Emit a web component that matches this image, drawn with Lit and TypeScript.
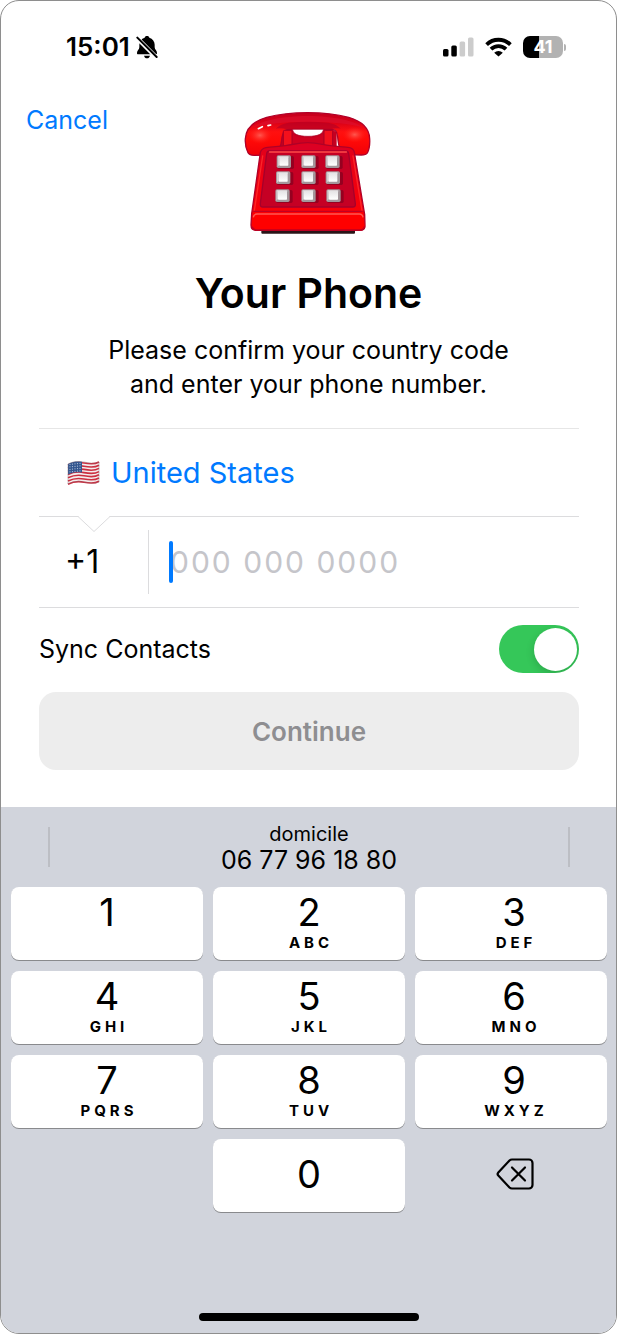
import { LitElement, html, css, svg, nothing } from "lit";
import { customElement, property, state } from "lit/decorators.js";

const KEYS: Array<[string, string]> = [
  ["1", ""],
  ["2", "ABC"],
  ["3", "DEF"],
  ["4", "GHI"],
  ["5", "JKL"],
  ["6", "MNO"],
  ["7", "PQRS"],
  ["8", "TUV"],
  ["9", "WXYZ"],
];

@customElement("status-bar")
export class StatusBar extends LitElement {
  static styles = css`
    :host {
      display: flex;
      align-items: center;
      justify-content: space-between;
      height: 92px;
      padding: 0 50px 0 65px;
      color: #000;
    }
    .group {
      display: flex;
      align-items: center;
    }
    .time {
      font-size: 26px;
      line-height: 30px;
      font-weight: 600;
    }
    .bell {
      margin-left: 6px;
    }
    .right {
      gap: 11px;
    }
    svg {
      display: block;
    }
    .battery {
      display: flex;
      align-items: center;
      gap: 1px;
    }
    .cell {
      width: 40px;
      height: 22px;
      border-radius: 7px;
      background: linear-gradient(90deg, #000 41%, #b2b2b2 41%);
      color: #fff;
      font-size: 18px;
      line-height: 22px;
      font-weight: 700;
      text-align: center;
    }
    .nub {
      width: 2px;
      height: 7px;
      border-radius: 0 2px 2px 0;
      background: #b2b2b2;
    }
  `;

  render() {
    return html`
      <div class="group">
        <span class="time">15:01</span>
        <svg class="bell" width="22" height="24" viewBox="0 0 66 72" aria-label="Silent">
          <path
            d="M33 3c4 0 6.500 2 7 5C50 11 56 19 56 29v8c0 6 7 10 7 17 0 3-1 4-3 4H6c-2 0-3-1-3-4 0-7 7-11 7-17v-8c0-10 6-18 16-21C26.500 5 29 3 33 3z"
          />
          <path d="M24 62h18c-1 5-5 8-9 8s-8-3-9-8z" />
          <path d="M-2 4 66 72" stroke="#fff" stroke-width="13" />
          <path d="M4 8 62 66" stroke="#000" stroke-width="6" stroke-linecap="round" />
        </svg>
      </div>
      <div class="group right">
        <svg width="31" height="20" viewBox="0 0 31 20" aria-label="Signal">
          <rect x="0" y="12" width="5.500" height="7.500" rx="1.500" />
          <rect x="8.300" y="8.500" width="5.500" height="11" rx="1.500" />
          <rect x="16.600" y="4.500" width="5.500" height="15" rx="1.500" fill="#ccc" />
          <rect x="25" y="0.500" width="5.500" height="19" rx="1.500" fill="#ccc" />
        </svg>
        <svg width="27" height="20" viewBox="0 0 27 20" aria-label="Wi-Fi">
          <g fill="none" stroke="#000" stroke-width="3.800">
            <path d="M1.600 7.600a17 17 0 0 1 23.800 0" />
            <path d="M6 12.200a10.700 10.700 0 0 1 15 0" />
          </g>
          <path d="M13.500 19.400 9.200 15.800a6.100 6.100 0 0 1 8.600 0z" />
        </svg>
        <div class="battery">
          <div class="cell">41</div>
          <div class="nub"></div>
        </div>
      </div>
    `;
  }
}

@customElement("phone-picture")
export class PhonePicture extends LitElement {
  static styles = css`
    :host {
      display: block;
    }
    svg {
      display: block;
    }
  `;

  render() {
    const xs = [
      [140, 214, 286],
      [138, 214, 287],
      [136, 214, 289],
    ];
    const ys = [166, 214, 268];
    return html`
      <svg width="127" height="124" viewBox="45 33 381 372" overflow="visible" aria-label="Telephone">
        <defs>
          <linearGradient id="handset" x1="0" y1="0" x2="0" y2="1">
            <stop offset="0" stop-color="#c4001f" />
            <stop offset="0.22" stop-color="#d80018" />
            <stop offset="0.45" stop-color="#ff1010" />
            <stop offset="0.65" stop-color="#ff0a08" />
            <stop offset="1" stop-color="#f00008" />
          </linearGradient>
          <radialGradient id="shine">
            <stop offset="0" stop-color="#ff6a60" stop-opacity="0.8" />
            <stop offset="1" stop-color="#ff2018" stop-opacity="0" />
          </radialGradient>
          <linearGradient id="body" x1="0" y1="0" x2="0" y2="1">
            <stop offset="0" stop-color="#e0001c" />
            <stop offset="0.5" stop-color="#f00010" />
            <stop offset="1" stop-color="#ff0000" />
          </linearGradient>
          <linearGradient id="cap" x1="0" y1="0" x2="0" y2="1">
            <stop offset="0" stop-color="#e4e2e4" />
            <stop offset="1" stop-color="#ffffff" />
          </linearGradient>
        </defs>
        <rect x="94" y="385" width="281" height="16" rx="3" fill="#2b1418" />
        <path d="M160 86h146l14 12v50H150v-50z" fill="#c60020" />
        <path
          d="M46 116C48 84 72 63 110 52c38-10 79-14 123-14s85 4 123 14c38 11 62 32 63 64 1 16-1 32-7 43-4 6-10 6-18 6l-40-1c-10-1-17-5-22-14-7-13-8-26-9-39l-3-13c-3-9-7-9-14-10H179c-9 0-16 2-19 10l-4 14c-1 13-3 26-10 39-5 8-12 13-22 14l-52 1c-8 0-14-1-18-8-6-11-9-26-8-42z"
          fill="url(#handset)"
          stroke="#b00028"
          stroke-width="4"
        />
        <path d="M68 82c24-20 84-33 165-34 81 1 141 14 165 34-38-11-93-16-165-16S106 71 68 82z" fill="#dc1030" opacity="0.6" />
        <path d="M138 86c12-12 24-16 40-18 38-4 76-4 114 0 16 2 28 6 40 18-10-3-22 0-36 2H174c-14-2-26-5-36-2z" fill="#b80024" opacity="0.7" />
        <ellipse cx="90" cy="106" rx="36" ry="26" fill="url(#shine)" />
        <ellipse cx="374" cy="104" rx="36" ry="24" fill="url(#shine)" />
        <path d="M85 86l12-6M114 77l8-2" stroke="#fff" stroke-width="5" stroke-linecap="round" />
        <path d="M188 88h92c0 14-17 21-46 21s-46-7-46-21z" fill="#fff" stroke="#a80024" stroke-width="2" />
        <path d="M187 103c10 8 26 11 47 11s37-3 47-11v30h-94z" fill="#cf0020" />
        <g stroke="#a90025" stroke-width="3">
          <rect x="160" y="91" width="26" height="52" rx="4" fill="#f3101c" />
          <rect x="282" y="91" width="26" height="52" rx="4" fill="#f3101c" />
        </g>
        <path
          d="M108 143c18-3 35-3 58-6 26-3 35-9 67-9s42 6 68 9c23 3 40 3 58 6 9 2 12 6 14 14l31 187 1 33c0 12-6 14-16 14H79c-12 0-16-5-16-16l2-34L91 158c2-8 7-13 17-15z"
          fill="url(#body)"
          stroke="#b00028"
          stroke-width="4"
        />
        <path d="M104 154c2-6 8-7 16-8 47-2 77-13 113-13s66 11 113 13c8 1 14 2 16 8l-258 0z" fill="#dc0024" />
        <path
          d="M118 153h229c6 0 8 3 9 8l20 150c1 7-2 10-8 10H99c-6 0-9-3-8-10l19-150c1-5 3-8 8-8z"
          fill="#c50024"
          stroke="#a6002b"
          stroke-width="4"
        />
        <path d="M119 156h230" stroke="#ff4a48" stroke-width="5" stroke-linecap="round" />
        <path d="M98 168 73 332M369 168l27 164" fill="none" stroke="#ff3030" stroke-width="4" stroke-linecap="round" opacity="0.8" />
        <path d="M70 338h329l5 40c0 9-6 11-14 11H79c-9 0-13-3-13-12z" fill="#ff0000" />
        <path d="M70 352c1-7 4-10 11-10h307c7 0 10 3 11 10" fill="none" stroke="#ff5850" stroke-width="4" />
        <path d="M70 334h328" stroke="#c20022" stroke-width="4" />
        <path d="M66 380c2 8 6 10 14 10h310c8 0 12-3 14-11" fill="none" stroke="#c00020" stroke-width="5" />
        ${ys.map((y, row) =>
          xs[row].map(
            (x) => svg`
              <rect x=${x + 2} y=${y + 2} width="50" height="39" rx="5" fill="#960020"></rect>
              <rect x=${x} y=${y} width="43" height="38" rx="5" fill="#a3969b"></rect>
              <path d=${`M${x + 3} ${y + 34}V${y + 5}q0-3 3-3h31l-5 5H${x + 8}v22z`} fill="#d5cdd0"></path>
              <rect x=${x + 8} y=${y + 4} width="27" height="27" rx="2" fill="url(#cap)"></rect>
            `
          )
        )}
      </svg>
    `;
  }
}

@customElement("number-pad")
export class NumberPad extends LitElement {
  static styles = css`
    :host {
      display: flex;
      flex-direction: column;
      background: #d1d4dc;
      color: #000;
    }
    button {
      box-sizing: border-box;
      border: 0;
      padding: 0;
      margin: 0;
      background: none;
      font-family: inherit;
      color: inherit;
    }
    .suggestions {
      display: flex;
      align-items: center;
      justify-content: space-between;
      height: 80px;
      padding: 0 46px 0 47px;
    }
    .bar {
      width: 2px;
      height: 40px;
      background: #bcbec4;
    }
    .suggestion {
      display: flex;
      flex-direction: column;
      align-items: center;
      line-height: 26px;
    }
    .label {
      font-size: 20px;
    }
    .value {
      font-size: 25px;
    }
    .keys {
      display: grid;
      grid-template-columns: repeat(3, 1fr);
      gap: 11px 10px;
      padding: 0 9px 0 10px;
    }
    .key {
      display: flex;
      flex-direction: column;
      align-items: center;
      justify-content: flex-start;
      gap: 3px;
      height: 73px;
      padding-top: 6px;
      border-radius: 8px;
      background: #fff;
      box-shadow: 0 1px 0 #898a8d;
    }
    .key:nth-child(3n) {
      padding-left: 6px;
    }
    .zero {
      grid-column: 2;
      justify-content: center;
      padding: 0 0 4px;
    }
    .digit {
      font-size: 38px;
      line-height: 38px;
    }
    .letters {
      font-size: 15px;
      line-height: 18px;
      font-weight: 700;
      letter-spacing: 4px;
      padding-left: 4px;
    }
    .erase {
      display: flex;
      align-items: center;
      justify-content: center;
      padding: 0 0 4px 8px;
    }
    .home {
      width: 220px;
      height: 8px;
      margin: auto auto 12px;
      border-radius: 4px;
      background: #000;
    }
  `;

  private press(key: string) {
    this.dispatchEvent(new CustomEvent("key", { detail: key }));
  }

  render() {
    return html`
      <div class="suggestions">
        <span class="bar"></span>
        <button class="suggestion" type="button">
          <span class="label">domicile</span>
          <span class="value">06 77 96 18 80</span>
        </button>
        <span class="bar"></span>
      </div>
      <div class="keys">
        ${KEYS.map(
          ([digit, letters]) => html`
            <button class="key" type="button" @click=${() => this.press(digit)}>
              <span class="digit">${digit}</span>
              ${letters ? html`<span class="letters">${letters}</span>` : nothing}
            </button>
          `
        )}
        <button class="key zero" type="button" @click=${() => this.press("0")}>
          <span class="digit">0</span>
        </button>
        <button class="erase" type="button" aria-label="Delete" @click=${() => this.press("erase")}>
          <svg width="38" height="32" viewBox="0 0 38 32" fill="none" stroke="#000" stroke-width="2.200" stroke-linecap="round" stroke-linejoin="round">
            <path d="M16 1.500h17a3.500 3.500 0 0 1 3.500 3.500v22a3.500 3.500 0 0 1-3.500 3.500H16q-1.500 0-2.500-1L2.300 17.500q-1.400-1.500 0-3L13.500 2.500q1-1 2.500-1z" />
            <path d="M16 9.500l13 13M29 9.500 16 22.500" />
          </svg>
        </button>
      </div>
      <div class="home"></div>
    `;
  }
}

@customElement("app-root")
export class AppRoot extends LitElement {
  static styles = css`
    :host {
      display: block;
      background: #fff;
      font-family: Inter, "Liberation Sans", sans-serif;
      color: #000;
    }
    * {
      box-sizing: border-box;
    }
    .screen {
      display: flex;
      flex-direction: column;
      min-height: calc(100vh - 2px);
      margin: 0 1px 2px 0;
      border: 1px solid #8e8e8e;
      border-radius: 19px;
      overflow: hidden;
    }
    button {
      border: 0;
      margin: 0;
      padding: 0;
      background: none;
      font-family: inherit;
    }
    .top {
      display: grid;
      grid-template-columns: 1fr auto 1fr;
      align-items: start;
      padding: 12px 25px 0;
    }
    .cancel {
      justify-self: start;
      font-size: 25px;
      line-height: 30px;
      color: #007aff;
    }
    .picture {
      margin-top: 6px;
    }
    h1 {
      margin: 33px 0 0;
      font-size: 41px;
      line-height: 50px;
      font-weight: 600;
      text-align: center;
    }
    .lead {
      margin: 15px 0 27px;
      font-size: 25px;
      line-height: 34px;
      text-align: center;
    }
    .form {
      display: flex;
      flex-direction: column;
      padding: 0 37px 0 38px;
    }
    .country {
      position: relative;
      display: flex;
      align-items: center;
      gap: 11px;
      height: 89px;
      padding-left: 28px;
      border-top: 1px solid #e6e6e6;
      border-bottom: 1px solid #dcdcde;
      font-size: 29px;
      line-height: 36px;
      color: #007aff;
    }
    .notch {
      position: absolute;
      left: 38px;
      top: 86px;
    }
    .number {
      display: flex;
      align-items: center;
      height: 91px;
      border-bottom: 1px solid #dcdcde;
      font-size: 30px;
      line-height: 36px;
    }
    .code {
      width: 110px;
      height: 64px;
      padding-left: 26px;
      border-right: 1px solid #dcdcde;
      font-size: 32px;
      line-height: 64px;
    }
    .field {
      position: relative;
      flex: 1;
      padding-left: 21px;
    }
    .caret {
      position: absolute;
      left: 20px;
      top: 0;
      width: 4px;
      height: 42px;
      border-radius: 2px;
      background: #007aff;
    }
    .input {
      display: block;
      width: 100%;
      height: 42px;
      padding: 0;
      border: 0;
      outline: 0;
      background: none;
      font: inherit;
      letter-spacing: 2px;
      color: #000;
      caret-color: transparent;
    }
    .input::placeholder {
      color: #c5c5ca;
      opacity: 1;
    }
    .sync {
      display: flex;
      align-items: center;
      justify-content: space-between;
      height: 82px;
      margin-bottom: 2px;
      font-size: 25px;
      line-height: 30px;
    }
    .switch {
      appearance: none;
      display: flex;
      align-items: center;
      width: 80px;
      height: 48px;
      margin: 0;
      padding: 0 2px;
      border-radius: 24px;
      overflow: hidden;
      background: #e9e9eb;
    }
    .switch::before {
      content: "";
      width: 43px;
      height: 43px;
      border-radius: 50%;
      background: #fff;
      box-shadow: 0 3px 8px rgba(0, 0, 0, 0.16);
    }
    .switch:checked {
      justify-content: flex-end;
      background: #35c759;
    }
    .continue {
      height: 78px;
      border-radius: 17px;
      background: #ededed;
      color: #8e8e91;
      font-size: 26px;
      font-weight: 600;
    }
    .pad {
      flex: 1;
      margin-top: 37px;
    }
  `;

  @property() country = "United States";
  @state() private phone = "";

  private onKey(event: CustomEvent<string>) {
    this.phone = event.detail === "erase" ? this.phone.slice(0, -1) : this.phone + event.detail;
  }

  private flag() {
    const wave = (y: number) => `M1 ${y + 2}C7 ${y - 1} 12 ${y - 1} 17 ${y}S27 ${y + 2} 32 ${y - 1}`;
    const stripes = [0, 1, 2, 3, 4, 5, 6];
    return html`
      <svg width="33" height="24" viewBox="0 0 33 24" aria-hidden="true">
        <path d="M1 3C7 0 12 0 17 1S27 3 32 1V21C27 23 22 22 17 21S7 20 1 23z" fill="#f3eeee" />
        ${stripes.map(
          (i) => svg`<path d=${wave(2 + i * 3.200)} fill="none" stroke="#cc2f40" stroke-width="1.600"></path>`
        )}
        <path d="M1 3C6 .500 10 .300 15 .800V11.500C10 11 6 11 1 13.500z" fill="#33568f" />
        ${[3, 5.500, 8, 10.500].map((y) =>
          [3, 5.500, 8, 10.500, 13].map(
            (x) => svg`<circle cx=${x} cy=${y + 0.600 - x * 0.100} r=".600" fill="#b9c7dd"></circle>`
          )
        )}
        <path d="M1 3C7 0 12 0 17 1S27 3 32 1V21C27 23 22 22 17 21S7 20 1 23z" fill="none" stroke="#7d6570" stroke-width=".600" opacity=".6" />
      </svg>
    `;
  }

  render() {
    return html`
      <main class="screen">
        <status-bar></status-bar>
        <div class="top">
          <button class="cancel" type="button">Cancel</button>
          <phone-picture class="picture"></phone-picture>
        </div>
        <h1>Your Phone</h1>
        <p class="lead">Please confirm your country code<br />and enter your phone number.</p>
        <form class="form" @submit=${(e: Event) => e.preventDefault()}>
          <button class="country" type="button">
            ${this.flag()}
            <span>${this.country}</span>
            <svg class="notch" width="34" height="18" viewBox="0 0 34 18" aria-hidden="true">
              <path d="M1 0H33V1L17 17 1 1z" fill="#fff" />
              <path d="M1 1.500 17 16.500 33 1.500" fill="none" stroke="#dcdcde" />
            </svg>
          </button>
          <div class="number">
            <label class="code" for="phone">+1</label>
            <div class="field">
              <input
                class="input"
                id="phone"
                type="tel"
                aria-label="Phone number"
                placeholder="000 000 0000"
                .value=${this.phone}
              />
              ${this.phone ? nothing : html`<span class="caret"></span>`}
            </div>
          </div>
          <div class="sync">
            <label for="sync">Sync Contacts</label>
            <input class="switch" id="sync" type="checkbox" checked />
          </div>
          <button class="continue" type="submit" ?disabled=${!this.phone}>Continue</button>
        </form>
        <number-pad class="pad" @key=${this.onKey}></number-pad>
      </main>
    `;
  }
}
